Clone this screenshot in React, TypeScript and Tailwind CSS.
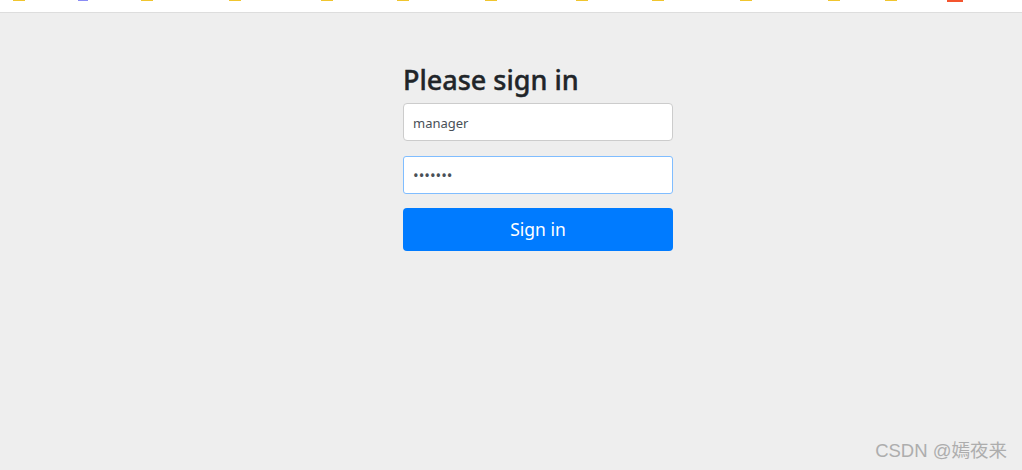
const marks = [
  { w: "w-3", ml: "ml-[13px]", color: "bg-[#f0c52e]", h: "h-[1px]" },
  { w: "w-[10px]", ml: "ml-[53px]", color: "bg-[#8a8cf5]", h: "h-[1px]" },
  { w: "w-3", ml: "ml-[53px]", color: "bg-[#f0c52e]", h: "h-[1px]" },
  { w: "w-3", ml: "ml-[76px]", color: "bg-[#f0c52e]", h: "h-[1px]" },
  { w: "w-3", ml: "ml-[80px]", color: "bg-[#f0c52e]", h: "h-[1px]" },
  { w: "w-3", ml: "ml-[64px]", color: "bg-[#f0c52e]", h: "h-[1px]" },
  { w: "w-3", ml: "ml-[76px]", color: "bg-[#f0c52e]", h: "h-[1px]" },
  { w: "w-3", ml: "ml-[79px]", color: "bg-[#f0c52e]", h: "h-[1px]" },
  { w: "w-3", ml: "ml-[64px]", color: "bg-[#f0c52e]", h: "h-[1px]" },
  { w: "w-3", ml: "ml-[76px]", color: "bg-[#f0c52e]", h: "h-[1px]" },
  { w: "w-3", ml: "ml-[76px]", color: "bg-[#f0c52e]", h: "h-[1px]" },
  { w: "w-3", ml: "ml-[45px]", color: "bg-[#f0c52e]", h: "h-[1px]" },
  { w: "w-4", ml: "ml-[50px]", color: "bg-[#f4552f]", h: "h-[2px]" },
];

const App = () => {
  return (
    <div className="relative flex h-[470px] w-[1022px] flex-col overflow-hidden bg-[#eeeeee] font-['Noto_Sans','Open_Sans',sans-serif]">
      <div className="flex h-[13px] items-start border-b border-[#dddddd] bg-white">
        {marks.map((mark, i) => (
          <div key={i} className={`${mark.w} ${mark.h} ${mark.ml} ${mark.color}`} />
        ))}
      </div>
      <form className="ml-[403px] flex w-[270px] flex-col pt-[45px]">
        <h2 className="mb-[2px] h-[43px] text-[27px] leading-[43px] font-medium text-[#212529] [-webkit-text-stroke:0.4px_#212529]">
          Please sign in
        </h2>
        <input
          type="text"
          defaultValue="manager"
          className="h-[38px] rounded border border-[#cccccc] bg-white px-[9px] pt-[2px] text-[13px] text-[#495057] outline-none"
        />
        <input
          type="password"
          defaultValue="1234567"
          className="mt-[15px] h-[38px] rounded-[3px] border border-[#80bdff] bg-white px-[9px] text-[15px] text-[#495057] outline-none"
        />
        <button
          type="button"
          className="mt-[14px] h-[43px] rounded bg-[#007bff] text-[17.5px] text-white"
        >
          Sign in
        </button>
      </form>
      <span className="absolute right-[15px] bottom-[7px] font-['Liberation_Sans','Noto_Sans_CJK_SC',sans-serif] text-[18.5px] leading-6 text-[#adadad]">
        CSDN @嫣夜来
      </span>
    </div>
  );
};

export default App;
